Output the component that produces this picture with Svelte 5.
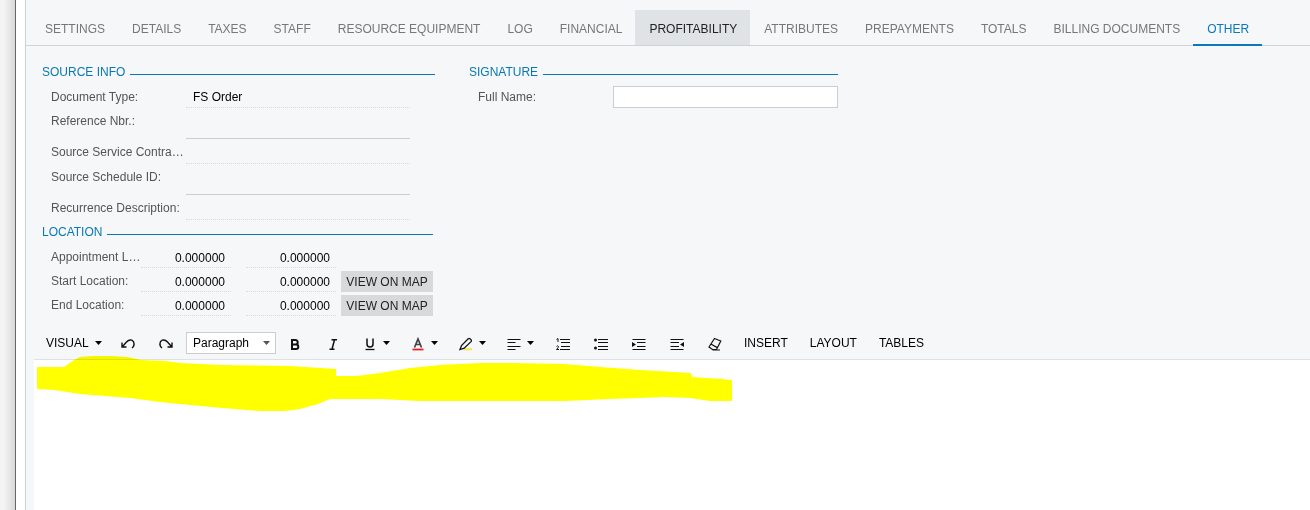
<script>
  const tabs = [
    'Settings', 'Details', 'Taxes', 'Staff', 'Resource Equipment', 'Log', 'Financial',
    'Profitability', 'Attributes', 'Prepayments', 'Totals', 'Billing Documents', 'Other'
  ];
  const hovered = 'Profitability';
  let active = $state('Other');

  const source = [
    { id: 'doc-type', label: 'Document Type:', value: 'FS Order', link: false },
    { id: 'ref-nbr', label: 'Reference Nbr.:', value: '', link: true },
    { id: 'contract', label: 'Source Service Contract ID:', value: '', link: false },
    { id: 'schedule', label: 'Source Schedule ID:', value: '', link: true },
    { id: 'recurrence', label: 'Recurrence Description:', value: '', link: false }
  ];

  const locations = [
    { id: 'appointment', label: 'Appointment Location:', map: false },
    { id: 'start', label: 'Start Location:', map: true },
    { id: 'end', label: 'End Location:', map: true }
  ];
</script>

{#snippet caret()}
  <svg class="caret" width="7" height="4" viewBox="0 0 7 4" aria-hidden="true"><path d="M0 0h7L3.5 4z" fill="currentColor" /></svg>
{/snippet}

<div class="shell">
  <div class="edge"></div>
  <main>
    <nav role="tablist">
      {#each tabs as tab}
        <button role="tab" class="tab" class:hovered={tab === hovered} class:active={tab === active}
          aria-selected={tab === active} onclick={() => (active = tab)}>{tab}</button>
      {/each}
    </nav>

    <form class="form" onsubmit={(e) => e.preventDefault()}>
      <div class="column">
        <section class="source">
          <h2>Source Info</h2>
          {#each source as f}
            <div class="row" class:link={f.link}>
              <label for={f.id}>{f.label}</label>
              <input id={f.id} value={f.value} readonly />
            </div>
          {/each}
        </section>
        <section class="location">
          <h2>Location</h2>
          {#each locations as l}
            <div class="place">
              <label for={l.id}>{l.label}</label>
              <input id={l.id} value="0.000000" readonly />
              <input value="0.000000" aria-label={l.label} readonly />
              {#if l.map}<button type="button" class="map">View on Map</button>{/if}
            </div>
          {/each}
        </section>
      </div>
      <section class="signature">
        <h2>Signature</h2>
        <div class="name">
          <label for="full-name">Full Name:</label>
          <input id="full-name" />
        </div>
      </section>
    </form>

    <div class="editor">
      <div class="toolbar" role="toolbar">
        <button class="mode">VISUAL {@render caret()}</button>
        <button class="tool" aria-label="Undo">
          <svg width="14" height="14" viewBox="0 0 14 14"><path d="M1 5.500V10h4.500M1.300 9.700 5.500 5Q8 2.200 10.800 3.200 13.500 4.500 13 8q-.4 2-2 3" stroke-width="1.400" /></svg>
        </button>
        <button class="tool" aria-label="Redo">
          <svg width="14" height="14" viewBox="0 0 14 14"><path d="M13 5.500V10H8.500M12.700 9.700 8.500 5Q6 2.200 3.200 3.200.5 4.500 1 8q.4 2 2 3" stroke-width="1.400" /></svg>
        </button>
        <span class="picker">
          <select aria-label="Paragraph style"><option>Paragraph</option></select>
          {@render caret()}
        </span>
        <button class="tool" aria-label="Bold">
          <svg width="14" height="14" viewBox="0 0 14 14"><path d="M4 3h3.500a2.200 2.200 0 0 1 0 4.400H4zm0 4.400h4a2.300 2.300 0 0 1 0 4.600H4z" stroke-width="2" /></svg>
        </button>
        <button class="tool" aria-label="Italic">
          <svg width="14" height="14" viewBox="0 0 14 14"><path d="M5.500 2.700H11M3.500 12.300H8.500M8.500 2.700 6 12.300" stroke-width="1.500" /></svg>
        </button>
        <button class="tool drop" aria-label="Underline">
          <svg width="14" height="14" viewBox="0 0 14 14"><path d="M4 1.500v5.500a3 3 0 0 0 6 0V1.500" stroke-width="1.500" /><path d="M2.500 12.500h9" stroke-width="1.300" /></svg>
          {@render caret()}
        </button>
        <button class="tool drop" aria-label="Text color">
          <svg width="14" height="14" viewBox="0 0 14 14"><path d="M3.500 10.500 7 2l3.500 8.500M4.700 7.500h4.600" stroke="#444" stroke-width="1.700" /><path d="M1.500 12.500h11" stroke="#e52222" stroke-width="1.800" /></svg>
          {@render caret()}
        </button>
        <button class="tool drop" aria-label="Highlight">
          <svg width="14" height="14" viewBox="0 0 14 14"><path d="M4.500 12.300H13" stroke="#f3e84b" stroke-width="2" /><path d="M1 12.500 2.500 8.500 9.200 1.800q1-.8 2 .1l.8.8q.8 1 0 1.900L5.200 11.200z" stroke-width="1.300" /></svg>
          {@render caret()}
        </button>
        <button class="tool drop" aria-label="Align">
          <svg width="14" height="14" viewBox="0 0 14 14"><path d="M.5 2.500h13M.5 5.500h8M.5 9.500h13M.5 12.500h8" /></svg>
          {@render caret()}
        </button>
        <button class="tool" aria-label="Numbered list">
          <svg width="14" height="14" viewBox="0 0 14 14"><path d="M4 2.500h10M5 5.500h9M5 9.500h9M4 12.500h10M.5 2.500 2 1.500V5M.5 9.500q1.500-1.500 2 0 0 1-2 3H3" /></svg>
        </button>
        <button class="tool" aria-label="Bulleted list">
          <svg width="14" height="14" viewBox="0 0 14 14"><path d="M4 2.500h10M4 5.500h10M4 9.500h10M4 12.500h10" /><circle cx="1.500" cy="3" r="1.500" class="solid" /><circle cx="1.500" cy="11" r="1.500" class="solid" /></svg>
        </button>
        <button class="tool" aria-label="Indent">
          <svg width="14" height="14" viewBox="0 0 14 14"><path d="M.5 2.500h13M5 5.500h8.500M5 9.500h8.500M.5 12.500h13" /><path d="M0 5v5l4-2.500z" class="solid" /></svg>
        </button>
        <button class="tool" aria-label="Outdent">
          <svg width="14" height="14" viewBox="0 0 14 14"><path d="M.5 2.500h13M.5 5.500H9M.5 9.500H9M.5 12.500h13" /><path d="M14 5v5l-4-2.500z" class="solid" /></svg>
        </button>
        <button class="tool" aria-label="Clear formatting">
          <svg width="14" height="16" viewBox="0 0 14 16"><path d="M6.500 2.500 12.800 5 8.500 13.500H4.500L1 11zM3.300 8.300l6 3.300M4.500 14h7.500" stroke-width="1.200" /></svg>
        </button>
        <button class="word">INSERT</button>
        <button class="word">LAYOUT</button>
        <button class="word">TABLES</button>
      </div>
      <div class="page" contenteditable="true" role="textbox" tabindex="0" aria-label="Text"></div>
      <svg class="marker" width="696" height="56" viewBox="37 356 696 56" aria-hidden="true">
        <path fill="#ff0" d="M37 367h27l10-7 6-3 12-1h20l16 1 13 3 24 1 15 2 40 2 70 1 46 3v7h21l23-3 30-5 30-3 40-2h35l50 1 35 3 40 3 51 3 1 4 30 2 10 1v21h-22l-20-3-25-1-25 1-30 1-45 2H420l-40-2h-50l-12 5-18 5-15 2h-25l-38-3-42-4-20-2-30-4-50-4-26-4-17-1z" />
      </svg>
    </div>
  </main>
</div>

<style>
  :global(body) { margin: 0; background: #fff; }
  .shell { display: flex; min-height: 100vh; font: 12px/14px "Liberation Sans", Arial, sans-serif; color: #000; }
  .edge { width: 15px; flex: none; margin-right: 9px; border-right: 1px solid #666; background: linear-gradient(90deg, #f4f4f4 4px, #d8d8d8); }
  main { flex: 1; min-width: 0; display: flex; flex-direction: column; border-left: 1px solid #cbd0d4; background: #f5f7f9; }
  button, input, select { font: inherit; color: inherit; box-sizing: border-box; border: 0; margin: 0; padding: 0; background: none; border-radius: 0; }

  nav { display: flex; padding: 10px 0 0 5px; border-bottom: 1px solid #cfd3d6; }
  .tab { height: 36px; margin-bottom: -1px; padding: 2px 13px 0 14px; border-bottom: 1px solid #cfd3d6; color: #777; text-transform: uppercase; white-space: nowrap; }
  .tab.hovered { background: #dfe3e5; color: #222; }
  .tab.active { border-bottom: 2px solid #0a78bd; padding-top: 3px; color: #0a78bd; }

  .form { display: flex; gap: 34px; padding: 19px 16px 0; }
  .column { flex: 0 1 393px; }
  .signature { flex: 0 1 369px; }
  h2 { display: flex; gap: 5px; margin: 0; font-size: 12px; font-weight: 400; line-height: 14px; text-transform: uppercase; white-space: nowrap; color: #0a78b5; }
  h2::after { content: ""; flex: 1; height: 9px; border-bottom: 1px solid #0a78b5; }
  label { color: #555; overflow: hidden; text-overflow: ellipsis; white-space: nowrap; }

  .row, .place, .name { padding-left: 9px; }
  .row { display: flex; height: 25px; margin-right: 25px; }
  .row label { flex: 0 0 135px; padding-top: 6px; }
  .row input { flex: 1; min-width: 0; padding: 0 7px; border-bottom: 1px dotted #d8dbde; }
  .row.link { height: 31px; }
  .row.link input { border-bottom: 1px solid #cbcdcf; }
  h2 + .row { height: 29px; }
  h2 + .row label { padding-top: 11px; }
  h2 + .row input { padding-top: 7px; }

  .location { padding-top: 5px; margin-right: 2px; }
  .place { display: grid; grid-template-columns: 90px minmax(0, 90px) minmax(0, 105px) 97px; height: 24px; }
  .place label { padding-top: 6px; }
  .place input { min-width: 0; padding: 4px 6px 0 0; text-align: right; border-bottom: 1px dotted #d8dbde; }
  .place input + input { margin-left: 15px; }
  .place .map { margin: 3px 0 0 5px; background: #d7d9db; color: #222; text-transform: uppercase; white-space: nowrap; }
  h2 + .place { height: 29px; }
  h2 + .place label { padding-top: 11px; }
  h2 + .place input { padding-top: 9px; }

  .name { display: flex; align-items: center; padding-top: 7px; }
  .name label { flex: 0 0 135px; }
  .name input { flex: 1; min-width: 0; height: 22px; padding: 0 6px; background: #fff; border: 1px solid #cbcdcf; }

  .editor { position: relative; flex: 1; display: flex; flex-direction: column; margin: 10px 0 0 8px; }
  .toolbar { display: flex; align-items: center; height: 33px; border-bottom: 1px solid #dfe2e5; }
  .mode { display: flex; align-items: center; gap: 6px; width: 75px; padding-left: 12px; }
  .tool { display: flex; align-items: center; justify-content: center; width: 38px; height: 28px; padding-top: 2px; }
  .drop { width: 48px; justify-content: flex-start; gap: 6px; padding-left: 11px; }
  .drop .caret { margin-top: -2px; }
  .caret { flex: none; }
  .tool svg:not(.caret) { flex: none; fill: none; stroke: #111; stroke-width: 1; }
  .tool .solid { fill: #111; stroke: none; }
  .picker { display: grid; width: 90px; height: 22px; align-items: center; margin-left: 1px; }
  .picker select { grid-area: 1 / 1; width: 100%; height: 22px; padding: 0 18px 0 6px; appearance: none; background: #fff; border: 1px solid #cbcdcf; }
  .picker .caret { grid-area: 1 / 1; justify-self: end; margin-right: 6px; color: #555; pointer-events: none; }
  .word { padding: 0 12px 0 10px; }
  .page { flex: 1; min-height: 140px; background: #fff; outline: 0; }
  .marker { position: absolute; left: 3px; top: 30px; mix-blend-mode: multiply; pointer-events: none; }
</style>
